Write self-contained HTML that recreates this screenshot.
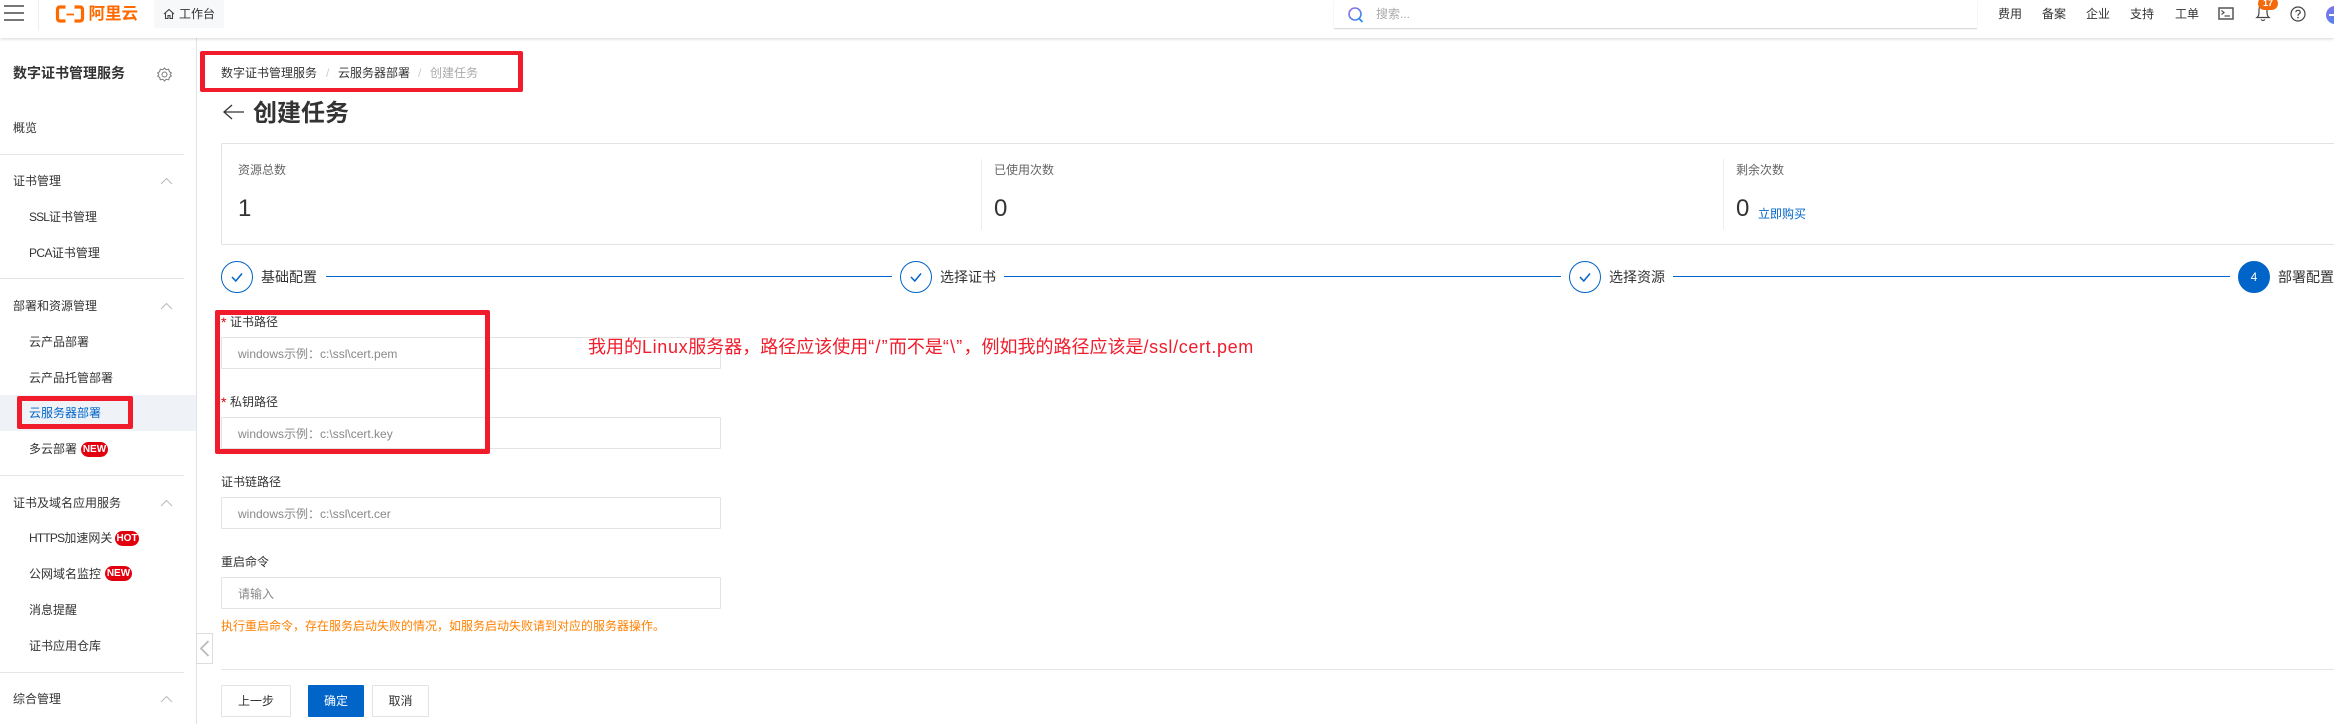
<!DOCTYPE html>
<html lang="zh-CN"><head><meta charset="utf-8"><title>创建任务</title>
<style>
html,body{margin:0;padding:0;background:#fff}
#p{position:relative;width:2334px;height:724px;overflow:hidden;background:#fff;font-family:"Liberation Sans","Noto Sans CJK SC",sans-serif;font-size:12px;color:#333}
#p div,#p svg{position:absolute}
.t{line-height:20px;height:20px;white-space:nowrap}
.g{color:#666}
.ph{color:#888}
.hr{background:#e5e5e5;height:1px}
.box{box-sizing:border-box;border:1px solid #e3e3e3;border-radius:1px;background:#fff}
.red{box-sizing:border-box;border:5px solid #f01c2c;border-radius:2px}
.inp{left:221px;width:500px;height:32px}
.bd{background:#e2000f;color:#fff;font-weight:700;font-size:10px;line-height:15px;height:15px;border-radius:8px;text-align:center}
.st{width:32px;height:32px;box-sizing:border-box;border:1px solid #0064c8;border-radius:50%;top:261px}
.ln{height:1px;background:#0064c8;top:276px}
.btn{top:685px;height:32px;box-sizing:border-box;border:1px solid #e3e3e3;line-height:30px;text-align:center;color:#333;border-radius:1px}
.lt{letter-spacing:.65px}
</style></head><body><div id="p">

<!-- header -->
<div style="left:0;top:0;width:2334px;height:38px;background:#fff;box-shadow:0 1px 3px rgba(0,0,0,.16);z-index:2"></div>
<div style="z-index:3;left:0;top:0;width:2334px;height:38px">
<div style="left:4px;top:5px;width:20px;height:2px;background:#777"></div>
<div style="left:4px;top:12px;width:20px;height:2px;background:#777"></div>
<div style="left:4px;top:19px;width:20px;height:2px;background:#777"></div>
<div style="left:38px;top:0;width:1px;height:31px;background:#eee"></div>
<svg style="left:55px;top:4.500px" width="30" height="18" viewBox="0 0 30 18"><path d="M10.500 2H5Q2.500 2 2.500 5V13Q2.500 16 5 16H10.500M19.500 2H25Q27.500 2 27.500 5V13Q27.500 16 25 16H19.500" fill="none" stroke="#ff6a00" stroke-width="3.200"/><path d="M11.500 9.500H19" stroke="#ff6a00" stroke-width="1.800"/></svg>
<div class="t" style="left:88.500px;top:4px;font-size:16.500px;font-weight:700;color:#ff6a00">阿里云</div>
<div style="left:154px;top:0;width:70px;height:28px;background:#f7f8f9"></div>
<svg style="left:163px;top:8px" width="12" height="12" viewBox="0 0 12 12"><path d="M1 6L6 1.500L11 6M2.500 5V10.500H5V7.500H7V10.500H9.500V5" fill="none" stroke="#444" stroke-width="1.100"/></svg>
<div class="t" style="left:179px;top:4px;color:#333">工作台</div>

<div style="left:1334px;top:0;width:643px;height:28px;background:#fff;box-shadow:0 1px 1px rgba(0,0,0,.18)"></div>
<svg style="left:1347px;top:6px" width="18" height="17" viewBox="0 0 18 17"><defs><linearGradient id="sg" x1="0" y1="0" x2="1" y2="1"><stop offset="0" stop-color="#9a6ee0"/><stop offset="1" stop-color="#2d8cf0"/></linearGradient></defs><circle cx="8" cy="8" r="6" fill="none" stroke="url(#sg)" stroke-width="1.600"/><path d="M12 12.500L15.500 16" stroke="#2d8cf0" stroke-width="1.800"/></svg>
<div class="t ph" style="left:1376px;top:4px;color:#aaa">搜索...</div>
<div class="t" style="left:1998px;top:4px">费用</div>
<div class="t" style="left:2042px;top:4px">备案</div>
<div class="t" style="left:2086px;top:4px">企业</div>
<div class="t" style="left:2130px;top:4px">支持</div>
<div class="t" style="left:2175px;top:4px">工单</div>
<svg style="left:2218px;top:7px" width="16" height="13" viewBox="0 0 16 13"><rect x="1" y="1" width="14" height="11" fill="none" stroke="#555" stroke-width="1.500"/><path d="M3.500 3.500L6 5.500L3.500 7.500M6.500 9H12" fill="none" stroke="#555" stroke-width="1.200"/></svg>
<svg style="left:2254px;top:3px" width="18" height="19" viewBox="0 0 18 19"><path d="M3 14.500Q5 13 5 9V6.500Q5 2.500 9 2.500Q13 2.500 13 6.500V9Q13 13 15 14.500ZM7 16.500Q9 18.500 11 16.500" fill="none" stroke="#444" stroke-width="1.200"/></svg>
<div style="left:2258px;top:-3px;width:20px;height:13px;border-radius:7px;background:#f4690c;color:#fff;font-size:9px;font-weight:700;line-height:13px;text-align:center">17</div>
<svg style="left:2289px;top:6px" width="18" height="16" viewBox="0 0 18 16"><circle cx="9" cy="8" r="7" fill="none" stroke="#444" stroke-width="1.200"/><path d="M6.800 6.200Q7 4.300 9 4.300Q11.200 4.300 11.200 6.200Q11.200 7.400 9.800 8Q9 8.500 9 9.700" fill="none" stroke="#444" stroke-width="1.200"/><circle cx="9" cy="11.600" r=".8" fill="#444"/></svg>
<svg style="left:2325px;top:6px" width="9" height="18" viewBox="0 0 9 18"><defs><linearGradient id="av" x1="0" y1="0" x2="1" y2="1"><stop offset="0" stop-color="#8a70e8"/><stop offset="1" stop-color="#3a8cf0"/></linearGradient></defs><circle cx="10" cy="9" r="9" fill="url(#av)"/><rect x="4" y="8" width="6" height="2" fill="#fff"/></svg>
</div>

<!-- sidebar -->
<div style="left:196px;top:38px;width:1px;height:686px;background:#e3e3e3"></div>
<div class="t" style="left:13px;top:63px;font-size:14px;font-weight:700;color:#333">数字证书管理服务</div>
<svg style="left:157px;top:67px" width="15" height="15" viewBox="0 0 24 24"><path d="M12 1.500L14.500 4.300L18.700 3.500L19.800 7.500L23 9.500L21 12L23 14.500L19.800 16.500L18.700 20.500L14.500 19.700L12 22.500L9.500 19.700L5.300 20.500L4.200 16.500L1 14.500L3 12L1 9.500L4.200 7.500L5.300 3.500L9.500 4.300Z" fill="none" stroke="#777" stroke-width="1.600" stroke-linejoin="round"/><circle cx="12" cy="12" r="4" fill="none" stroke="#777" stroke-width="1.600"/></svg>
<div class="t" style="left:13px;top:118px">概览</div>
<div class="hr" style="left:0;top:154px;width:184px"></div>
<div class="t" style="left:13px;top:171px">证书管理</div>
<svg style="left:160px;top:177px" width="13" height="8" viewBox="0 0 13 8"><path d="M1 7L6.500 1.500L12 7" fill="none" stroke="#bbb"/></svg>
<div class="t" style="left:29px;top:207px"><span style="letter-spacing:-.9px">SSL</span>证书管理</div>
<div class="t" style="left:29px;top:243px"><span style="letter-spacing:-.6px">PCA</span>证书管理</div>
<div class="hr" style="left:0;top:278px;width:184px"></div>
<div class="t" style="left:13px;top:296px">部署和资源管理</div>
<svg style="left:160px;top:302px" width="13" height="8" viewBox="0 0 13 8"><path d="M1 7L6.500 1.500L12 7" fill="none" stroke="#bbb"/></svg>
<div class="t" style="left:29px;top:332px">云产品部署</div>
<div class="t" style="left:29px;top:368px">云产品托管部署</div>
<div style="left:0;top:395px;width:196px;height:36px;background:#eff3f8"></div>
<div class="t" style="left:29px;top:403px;color:#0064c8">云服务器部署</div>
<div class="red" style="left:17px;top:396px;width:116px;height:33px"></div>
<div class="t" style="left:29px;top:439px">多云部署</div>
<div class="bd" style="left:81px;top:442px;width:27px">NEW</div>
<div class="hr" style="left:0;top:475px;width:184px"></div>
<div class="t" style="left:13px;top:493px">证书及域名应用服务</div>
<svg style="left:160px;top:499px" width="13" height="8" viewBox="0 0 13 8"><path d="M1 7L6.500 1.500L12 7" fill="none" stroke="#bbb"/></svg>
<div class="t" style="left:29px;top:528px"><span style="letter-spacing:-.8px">HTTPS</span>加速网关</div>
<div class="bd" style="left:115px;top:531px;width:24px">HOT</div>
<div class="t" style="left:29px;top:564px">公网域名监控</div>
<div class="bd" style="left:105px;top:566px;width:27px">NEW</div>
<div class="t" style="left:29px;top:600px">消息提醒</div>
<div class="t" style="left:29px;top:636px">证书应用仓库</div>
<div class="hr" style="left:0;top:672px;width:184px"></div>
<div class="t" style="left:13px;top:689px">综合管理</div>
<svg style="left:160px;top:695px" width="13" height="8" viewBox="0 0 13 8"><path d="M1 7L6.500 1.500L12 7" fill="none" stroke="#bbb"/></svg>
<div style="left:196px;top:633px;width:17px;height:31px;box-sizing:border-box;border:1px solid #ddd;background:#fff"></div>
<svg style="left:199px;top:639px" width="11" height="19" viewBox="0 0 11 19"><path d="M9.500 2L2 9.500L9.500 17" fill="none" stroke="#bbb" stroke-width="1.800"/></svg>

<!-- breadcrumb -->
<div class="t" style="left:221px;top:63px">数字证书管理服务</div>
<div class="t" style="left:326px;top:63px;color:#ccc">/</div>
<div class="t" style="left:338px;top:63px">云服务器部署</div>
<div class="t" style="left:418px;top:63px;color:#ccc">/</div>
<div class="t" style="left:430px;top:63px;color:#aaa">创建任务</div>
<div class="red" style="left:200px;top:51px;width:323px;height:41px;border-width:4px 5px"></div>
<svg style="left:222px;top:103px" width="23" height="18" viewBox="0 0 23 18"><path d="M10 2L2 9L10 16M2 9H22" fill="none" stroke="#333" stroke-width="1.300"/></svg>
<div class="t" style="left:253px;top:99px;height:30px;line-height:30px;font-size:24px;font-weight:700;color:#333">创建任务</div>

<!-- card -->
<div class="box" style="left:221px;top:143px;width:2200px;height:102px;border-radius:2px"></div>
<div class="t g" style="left:238px;top:160px">资源总数</div>
<div class="t" style="left:238px;top:194px;height:30px;line-height:30px;font-size:24px">1</div>
<div style="left:981px;top:159px;width:1px;height:71px;background:#eee"></div>
<div class="t g" style="left:994px;top:160px">已使用次数</div>
<div class="t" style="left:994px;top:194px;height:30px;line-height:30px;font-size:24px">0</div>
<div style="left:1723px;top:159px;width:1px;height:71px;background:#eee"></div>
<div class="t g" style="left:1736px;top:160px">剩余次数</div>
<div class="t" style="left:1736px;top:194px;height:30px;line-height:30px;font-size:24px">0</div>
<div class="t" style="left:1758px;top:204px;color:#0064c8">立即购买</div>

<!-- steps -->
<div class="st" style="left:221px"></div>
<div class="t" style="left:261px;top:267px;font-size:14px">基础配置</div>
<div class="ln" style="left:326px;width:566px"></div>
<div class="st" style="left:900px"></div>
<div class="t" style="left:940px;top:267px;font-size:14px">选择证书</div>
<div class="ln" style="left:1004px;width:557px"></div>
<div class="st" style="left:1569px"></div>
<div class="t" style="left:1609px;top:267px;font-size:14px">选择资源</div>
<div class="ln" style="left:1673px;width:557px"></div>
<div class="st" style="left:2238px;background:#0064c8;color:#fff;text-align:center;line-height:30px;font-size:12px">4</div>
<div class="t" style="left:2278px;top:267px;font-size:14px">部署配置</div>
<svg style="left:230px;top:270px" width="14" height="14" viewBox="0 0 14 14"><path d="M2 7L5.800 11L12 3.500" fill="none" stroke="#0064c8" stroke-width="1.500"/></svg>
<svg style="left:909px;top:270px" width="14" height="14" viewBox="0 0 14 14"><path d="M2 7L5.800 11L12 3.500" fill="none" stroke="#0064c8" stroke-width="1.500"/></svg>
<svg style="left:1578px;top:270px" width="14" height="14" viewBox="0 0 14 14"><path d="M2 7L5.800 11L12 3.500" fill="none" stroke="#0064c8" stroke-width="1.500"/></svg>

<!-- form -->
<div class="t" style="left:221px;top:312px;color:#e2000f;font-size:14px">*</div>
<div class="t" style="left:230px;top:312px">证书路径</div>
<div class="box inp" style="top:337px"></div>
<div class="t ph" style="left:238px;top:344px">windows示例：c:\ssl\cert.pem</div>
<div class="t" style="left:221px;top:392px;color:#e2000f;font-size:14px">*</div>
<div class="t" style="left:230px;top:392px">私钥路径</div>
<div class="box inp" style="top:417px"></div>
<div class="t ph" style="left:238px;top:424px">windows示例：c:\ssl\cert.key</div>
<div class="red" style="left:215px;top:310px;width:275px;height:144px"></div>
<div class="t" style="left:221px;top:472px">证书链路径</div>
<div class="box inp" style="top:497px"></div>
<div class="t ph" style="left:238px;top:504px">windows示例：c:\ssl\cert.cer</div>
<div class="t" style="left:221px;top:552px">重启命令</div>
<div class="box inp" style="top:577px"></div>
<div class="t ph" style="left:238px;top:584px">请输入</div>
<div class="t" style="left:221px;top:616px;color:#ff8000">执行重启命令，存在服务启动失败的情况，如服务启动失败请到对应的服务器操作。</div>
<div class="t" style="left:588px;top:337px;font-size:18px;color:#f01c2c">我用的<span class="lt">Linux</span>服务器，路径应该使用<span style="letter-spacing:1.200px">“/”</span>而不是<span style="letter-spacing:1.200px">“\”</span>，例如我的路径应该是<span class="lt">/ssl/cert.pem</span></div>
<div class="hr" style="left:221px;top:669px;width:2113px"></div>
<div class="btn" style="left:221px;width:70px">上一步</div>
<div class="btn" style="left:308px;width:56px;background:#0064c8;border-color:#0064c8;color:#fff">确定</div>
<div class="btn" style="left:372px;width:57px">取消</div>
</div></body></html>
